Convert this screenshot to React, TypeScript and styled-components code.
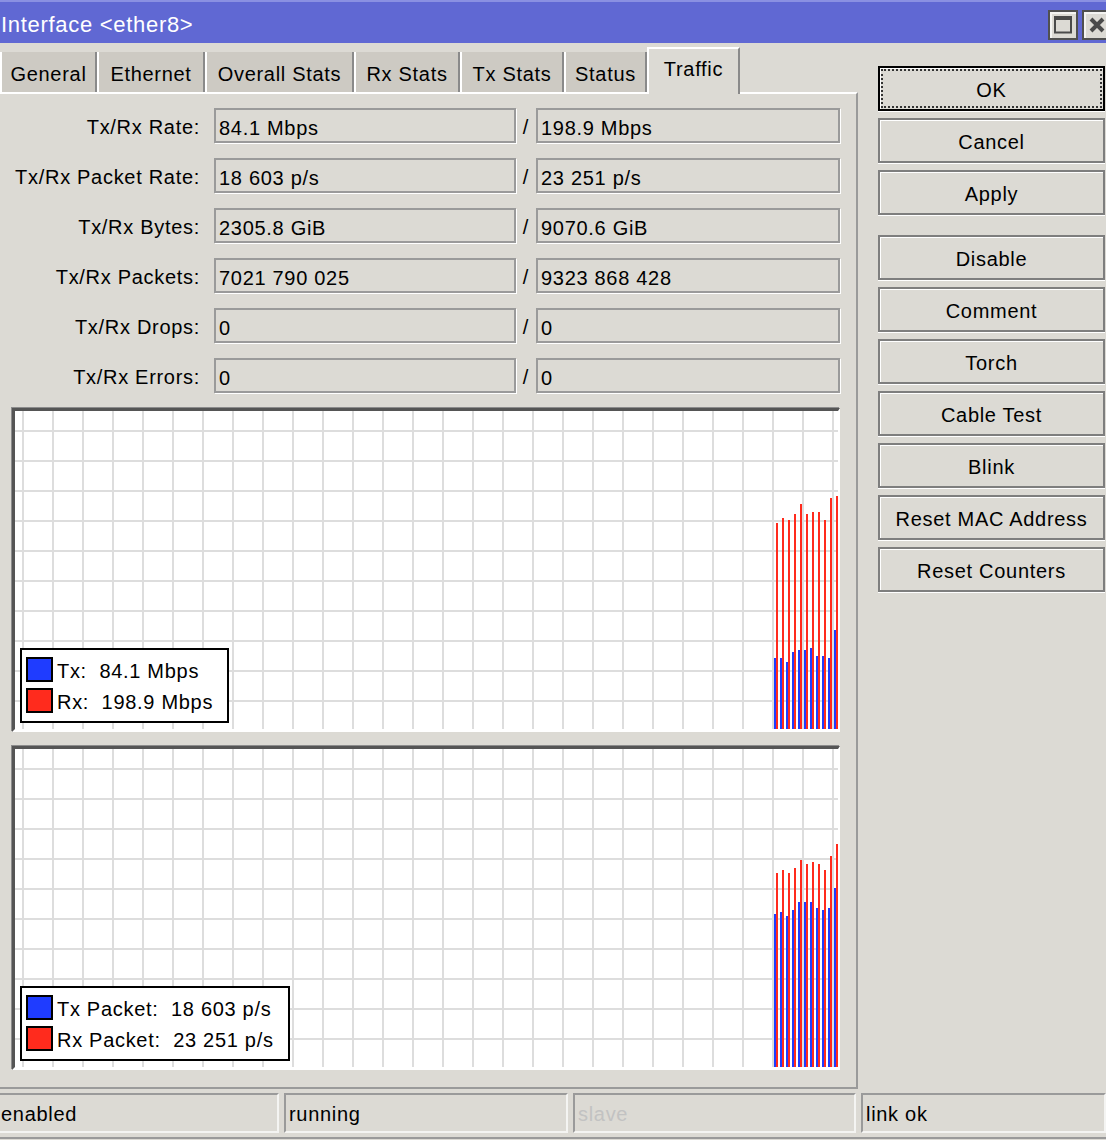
import styled, { createGlobalStyle } from "styled-components";

const GlobalStyle = createGlobalStyle`
  html, body {
    margin: 0;
    padding: 0;
    background: #dcdad4;
  }
  body {
    font-family: "Liberation Sans", Arial, sans-serif;
    font-size: 20px;
    letter-spacing: 0.7px;
    color: #000;
  }
`;

const Window = styled.div`
  width: 1106px;
  height: 1140px;
  overflow: hidden;
  background: #dcdad4;
  display: flex;
  flex-direction: column;
`;

const TitleBar = styled.div`
  height: 43px;
  flex: none;
  box-sizing: border-box;
  background: #6068d3;
  border-top: 2px solid #8a90e2;
  display: flex;
  align-items: center;
  justify-content: space-between;
  padding-left: 1px;
`;

const Title = styled.span`
  color: #fff;
  font-size: 22px;
  padding-top: 4px;
`;

const TitleButtons = styled.div`
  display: flex;
  gap: 4px;
  margin-right: -6px;
  margin-top: 4px;
`;

const TitleButton = styled.div`
  width: 30px;
  height: 30px;
  box-sizing: border-box;
  border: 2px solid #505050;
  background: #dcdad4;
  box-shadow: inset 2px 2px 0 #f4f4f2;
  display: flex;
  align-items: center;
  justify-content: center;
`;

const Body = styled.div`
  display: flex;
  height: 1046px;
  flex: none;
`;

const LeftSide = styled.div`
  width: 858px;
  display: flex;
  flex-direction: column;
`;

const TabStrip = styled.div`
  height: 49px;
  display: flex;
  align-items: flex-end;
`;

const Tab = styled.div<{ $w: number; $active?: boolean }>`
  width: ${(p) => p.$w}px;
  box-sizing: border-box;
  height: ${(p) => (p.$active ? 47 : 40)}px;
  background: ${(p) => (p.$active ? "#dcdad4" : "#cdcac3")};
  border-left: 2px solid #fff;
  border-right: 2px solid #8a8a8a;
  border-top: ${(p) => (p.$active ? "2px solid #fff" : "none")};
  margin-bottom: ${(p) => (p.$active ? "-2px" : "0")};
  position: ${(p) => (p.$active ? "relative" : "static")};
  z-index: ${(p) => (p.$active ? 1 : 0)};
  text-align: center;
  line-height: ${(p) => (p.$active ? "40px" : "44px")};
  white-space: nowrap;
`;

const Panel = styled.div`
  flex: 1;
  box-sizing: border-box;
  border-top: 2px solid #fff;
  border-right: 2px solid #9a9a9a;
  border-bottom: 2px solid #9a9a9a;
  padding-top: 14px;
  display: flex;
  flex-direction: column;
`;

const Rows = styled.div`
  display: flex;
  flex-direction: column;
  gap: 15px;
`;

const Row = styled.div`
  display: flex;
  align-items: center;
  height: 35px;
`;

const Label = styled.div`
  width: 200px;
  margin-right: 14px;
  text-align: right;
  padding-top: 4px;
  white-space: nowrap;
`;

const ValueBox = styled.div<{ $w: number }>`
  width: ${(p) => p.$w}px;
  height: 35px;
  box-sizing: border-box;
  border: 2px solid #9a9a9a;
  box-shadow: 1px 1px 0 #fff;
  padding: 4px 0 0 3px;
  line-height: 29px;
  white-space: nowrap;
`;

const Slash = styled.div`
  width: 20px;
  text-align: center;
  padding-top: 4px;
`;

const ChartFrame = styled.div<{ $top: number }>`
  position: relative;
  margin: ${(p) => p.$top}px 0 0 12px;
  width: 828px;
  height: 324px;
  box-sizing: border-box;
  background: #fff;
  border-top: 3px solid #555;
  border-left: 3px solid #555;
  border-right: 2px solid #fff;
  border-bottom: 3px solid #fff;
  box-shadow: -1px -1px 0 #8c8c8c;

  svg {
    display: block;
  }
`;

const Legend = styled.div`
  position: absolute;
  left: 5px;
  bottom: 6px;
  background: #fff;
  border: 2px solid #000;
  padding: 7px 14px 8px 4px;
  display: flex;
  flex-direction: column;
  gap: 6px;
`;

const LegendRow = styled.div`
  display: flex;
  align-items: center;
  height: 25px;
`;

const Swatch = styled.div<{ $color: string }>`
  width: 27px;
  height: 25px;
  box-sizing: border-box;
  border: 2px solid #000;
  background: ${(p) => p.$color};
  margin-right: 4px;
`;

const LegendText = styled.span`
  white-space: pre;
  padding-top: 3px;
`;

const ButtonColumn = styled.div`
  padding: 23px 0 0 20px;
  display: flex;
  flex-direction: column;
  gap: 7px;
`;

const Spacer = styled.div`
  height: 6px;
`;

const Button = styled.div<{ $default?: boolean }>`
  position: relative;
  width: 227px;
  height: 45px;
  box-sizing: border-box;
  background: #dcdad4;
  border: 2px solid ${(p) => (p.$default ? "#000" : "#7e7e7e")};
  box-shadow: inset 1px 1px 0 #fff, 0 1px 0 #fff;
  display: flex;
  align-items: center;
  justify-content: center;
  padding-top: 3px;
  white-space: nowrap;

  ${(p) =>
    p.$default &&
    `
    &::after {
      content: "";
      position: absolute;
      top: 1px;
      left: 1px;
      right: 1px;
      bottom: 1px;
      border: 2px dotted #333;
    }
  `}
`;

const StatusBar = styled.div`
  margin: 4px 0 0 -4px;
  padding-bottom: 4px;
  border-bottom: 2px solid #9a9a9a;
  display: grid;
  grid-template-columns: 283px 284px 283px 1fr;
  column-gap: 5px;
`;

const StatusCell = styled.div<{ $dim?: boolean }>`
  height: 40px;
  box-sizing: border-box;
  border-top: 2px solid #9a9a9a;
  border-left: 2px solid #9a9a9a;
  border-bottom: 2px solid #f4f4f2;
  border-right: 2px solid #f4f4f2;
  padding: 8px 0 0 3px;
  color: ${(p) => (p.$dim ? "#c2c2c2" : "#000")};
  white-space: nowrap;
`;

const CHART_W = 823;
const CHART_H = 318;

type Bars = { tx: number[]; rx: number[] };

const rateBars: Bars = {
  rx: [112, 107, 109, 103, 93, 103, 101, 101, 109, 87, 85],
  tx: [247, 247, 251, 241, 239, 239, 237, 245, 245, 247, 219],
};

const packetBars: Bars = {
  rx: [124, 121, 124, 119, 111, 115, 113, 115, 121, 107, 95],
  tx: [165, 163, 167, 161, 153, 153, 153, 159, 161, 159, 139],
};

const TX_COLOR = "#1f3cff";
const RX_COLOR = "#ff2b1d";

function Chart({
  top,
  bars,
  legend,
}: {
  top: number;
  bars: Bars;
  legend: string[];
}) {
  const vLines = [];
  for (let x = 7; x < CHART_W; x += 30) vLines.push(x);
  const hLines = [];
  for (let y = 19; y < CHART_H; y += 30) hLines.push(y);

  return (
    <ChartFrame $top={top}>
      <svg width={CHART_W} height={CHART_H}>
        {vLines.map((x) => (
          <rect key={"v" + x} x={x} y={0} width={2} height={CHART_H} fill="#dddddd" />
        ))}
        {hLines.map((y) => (
          <rect key={"h" + y} x={0} y={y} width={CHART_W} height={2} fill="#dddddd" />
        ))}
        {bars.tx.map((t, i) => (
          <rect key={"t" + i} x={759 + i * 6} y={t} width={2} height={CHART_H - t} fill={TX_COLOR} />
        ))}
        {bars.rx.map((t, i) => (
          <rect key={"r" + i} x={761 + i * 6} y={t} width={2} height={CHART_H - t} fill={RX_COLOR} />
        ))}
      </svg>
      <Legend>
        <LegendRow>
          <Swatch $color={TX_COLOR} />
          <LegendText>{legend[0]}</LegendText>
        </LegendRow>
        <LegendRow>
          <Swatch $color={RX_COLOR} />
          <LegendText>{legend[1]}</LegendText>
        </LegendRow>
      </Legend>
    </ChartFrame>
  );
}

const tabs = [
  { name: "General", w: 97 },
  { name: "Ethernet", w: 108 },
  { name: "Overall Stats", w: 149 },
  { name: "Rx Stats", w: 106 },
  { name: "Tx Stats", w: 104 },
  { name: "Status", w: 83 },
  { name: "Traffic", w: 93, active: true },
];

const fields = [
  ["Tx/Rx Rate:", "84.1 Mbps", "198.9 Mbps"],
  ["Tx/Rx Packet Rate:", "18 603 p/s", "23 251 p/s"],
  ["Tx/Rx Bytes:", "2305.8 GiB", "9070.6 GiB"],
  ["Tx/Rx Packets:", "7021 790 025", "9323 868 428"],
  ["Tx/Rx Drops:", "0", "0"],
  ["Tx/Rx Errors:", "0", "0"],
];

const App = () => {
  return (
    <>
      <GlobalStyle />
      <Window>
        <TitleBar>
          <Title>Interface &lt;ether8&gt;</Title>
          <TitleButtons>
            <TitleButton>
              <svg width="18" height="18" viewBox="0 0 18 18">
                <rect x="1" y="1.5" width="16" height="15" fill="none" stroke="#4a4a4a" strokeWidth="2" />
                <rect x="0" y="0" width="18" height="4" fill="#4a4a4a" />
              </svg>
            </TitleButton>
            <TitleButton>
              <svg width="16" height="16" viewBox="0 0 16 16">
                <path d="M2 2 L14 14 M14 2 L2 14" stroke="#4a4a4a" strokeWidth="4" />
              </svg>
            </TitleButton>
          </TitleButtons>
        </TitleBar>

        <Body>
          <LeftSide>
            <TabStrip>
              {tabs.map((t) => (
                <Tab key={t.name} $w={t.w} $active={t.active}>
                  {t.name}
                </Tab>
              ))}
            </TabStrip>
            <Panel>
              <Rows>
                {fields.map(([label, tx, rx]) => (
                  <Row key={label}>
                    <Label>{label}</Label>
                    <ValueBox $w={302}>{tx}</ValueBox>
                    <Slash>/</Slash>
                    <ValueBox $w={304}>{rx}</ValueBox>
                  </Row>
                ))}
              </Rows>
              <Chart top={15} bars={rateBars} legend={["Tx:  84.1 Mbps", "Rx:  198.9 Mbps"]} />
              <Chart
                top={14}
                bars={packetBars}
                legend={["Tx Packet:  18 603 p/s", "Rx Packet:  23 251 p/s"]}
              />
            </Panel>
          </LeftSide>

          <ButtonColumn>
            <Button $default>OK</Button>
            <Button>Cancel</Button>
            <Button>Apply</Button>
            <Spacer />
            <Button>Disable</Button>
            <Button>Comment</Button>
            <Button>Torch</Button>
            <Button>Cable Test</Button>
            <Button>Blink</Button>
            <Button>Reset MAC Address</Button>
            <Button>Reset Counters</Button>
          </ButtonColumn>
        </Body>

        <StatusBar>
          <StatusCell>enabled</StatusCell>
          <StatusCell>running</StatusCell>
          <StatusCell $dim>slave</StatusCell>
          <StatusCell>link ok</StatusCell>
        </StatusBar>
      </Window>
    </>
  );
};

export default App;
